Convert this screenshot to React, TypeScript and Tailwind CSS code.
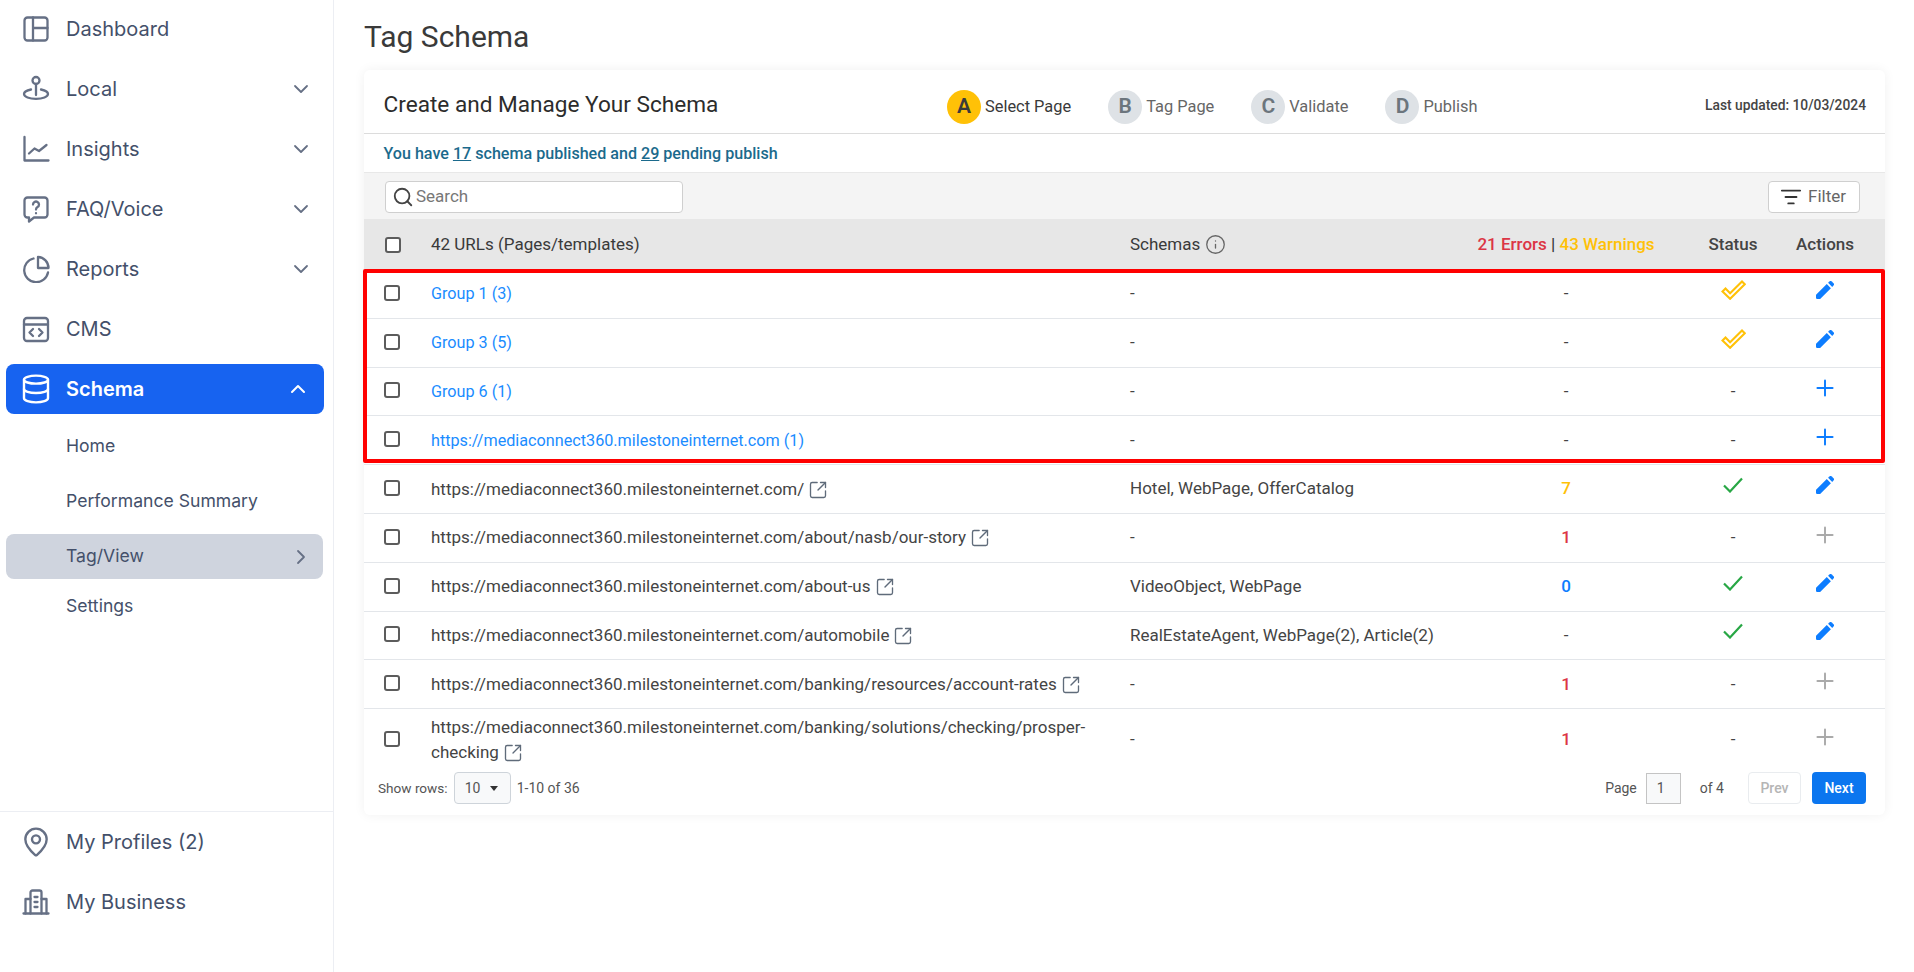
import React from "react";
import {
  ChevronDown,
  ChevronRight,
  ChevronUp,
  Database,
  Info,
  ListFilter,
  MapPin,
  Plus,
  Search,
  SquareArrowOutUpRight,
} from "lucide-react";

type IconProps = { className?: string };

const base = {
  viewBox: "0 0 28 28",
  fill: "none",
  stroke: "currentColor",
  strokeWidth: 2.3,
  strokeLinecap: "round" as const,
  strokeLinejoin: "round" as const,
};

const DashboardIcon = ({ className }: IconProps) => (
  <svg {...base} className={className}>
    <rect x="2.500" y="2.500" width="23" height="23" rx="3" />
    <path d="M11 2.500v23M11 13h14.500" />
  </svg>
);

const LocalIcon = ({ className }: IconProps) => (
  <svg {...base} className={className}>
    <circle cx="14" cy="5.500" r="3.500" />
    <path d="M14 9v11" />
    <path d="M9 14.500c-4 .8-7 2.400-7 4.600 0 2.700 5.400 4.700 12 4.700s12-2 12-4.700c0-2.200-3-3.800-7-4.600" />
  </svg>
);

const InsightsIcon = ({ className }: IconProps) => (
  <svg {...base} className={className}>
    <path d="M2.500 2v23.500h24" />
    <path d="M7 18.500l5.500-5 4.500 2.500 7.500-6" />
  </svg>
);

const FaqIcon = ({ className }: IconProps) => (
  <svg {...base} className={className}>
    <path d="M5.500 2.500h17a3 3 0 0 1 3 3v14a3 3 0 0 1-3 3H12l-5 4v-4H5.500a3 3 0 0 1-3-3v-14a3 3 0 0 1 3-3z" />
    <path d="M11 9.500a3 3 0 1 1 4.500 2.600c-1 .6-1.500 1.200-1.500 2.400" />
    <path d="M14 18.200v.1" />
  </svg>
);

const ReportsIcon = ({ className }: IconProps) => (
  <svg {...base} className={className}>
    <path d="M11.500 3.500A12 12 0 1 0 26 17.500" />
    <path d="M16 2a11 11 0 0 1 10.500 11H16z" />
  </svg>
);

const CmsIcon = ({ className }: IconProps) => (
  <svg {...base} className={className}>
    <rect x="2" y="3" width="24" height="23" rx="3" />
    <path d="M2 9.500h24" />
    <path d="M11 14l-3.500 3.500L11 21M17 14l3.500 3.500L17 21" />
  </svg>
);

const BusinessIcon = ({ className }: IconProps) => (
  <svg {...base} className={className}>
    <path d="M1.500 25.500h25" />
    <path d="M8.500 25.500V4.500a2 2 0 0 1 2-2h7a2 2 0 0 1 2 2v21" />
    <path d="M8.500 11H3.500v14.500M19.500 11h5v14.500" />
    <path d="M12.500 9h3M12.500 14h3M12.500 19h3" />
  </svg>
);

const PencilIcon = ({ className }: IconProps) => (
  <svg viewBox="0 0 18 18" fill="currentColor" className={className}>
    <path d="M0.300 13.600 10.800 3.100l4.100 4.100L4.400 17.700a1 1 0 0 1-.5.3H1.200A1.200 1.200 0 0 1 0 16.800v-2.500a1 1 0 0 1 .3-.7z" />
    <path d="M12.100 1.800 13.400.500a1.700 1.700 0 0 1 2.400 0l1.700 1.700a1.700 1.700 0 0 1 0 2.400l-1.300 1.300z" />
  </svg>
);

const DoubleCheck = ({ className }: IconProps) => (
  <svg viewBox="0 0 25 20" fill="none" stroke="currentColor" strokeWidth="2.100" strokeLinejoin="miter" className={className}>
    <path d="M1.500 11.500 4.500 8.600 9.100 13.300 21 1.500 23.800 4.300 9.100 18.800z" />
  </svg>
);

const GreenCheck = ({ className }: IconProps) => (
  <svg viewBox="0 0 20 16" fill="none" stroke="currentColor" strokeWidth="2.200" className={className}>
    <path d="M1 8.500 7 14.500 19 1.500" />
  </svg>
);

type NavItem = {
  label: string;
  icon: React.ComponentType<IconProps>;
  chevron?: boolean;
};

const topNav: NavItem[] = [
  { label: "Dashboard", icon: DashboardIcon },
  { label: "Local", icon: LocalIcon, chevron: true },
  { label: "Insights", icon: InsightsIcon, chevron: true },
  { label: "FAQ/Voice", icon: FaqIcon, chevron: true },
  { label: "Reports", icon: ReportsIcon, chevron: true },
  { label: "CMS", icon: CmsIcon },
];

function Sidebar() {
  return (
    <aside className="w-[334px] h-full shrink-0 border-r border-[#eceef3] flex flex-col justify-between font-['Inter',sans-serif] text-[#44506a]">
      <div className="pt-1">
        {topNav.map((item) => (
          <div key={item.label} className="h-[50px] mb-[10px] mx-[6px] pl-4 pr-[14px] flex items-center text-[20px]">
            <item.icon className="w-7 h-7 text-[#667085] shrink-0" />
            <span className="ml-[16px] flex-1">{item.label}</span>
            {item.chevron && <ChevronDown className="w-6 h-6 text-[#667085]" strokeWidth={1.8} />}
          </div>
        ))}
        <div className="h-[50px] mx-[6px] w-[318px] pl-4 pr-[14px] flex items-center text-[20px] font-semibold text-white bg-[#1763f0] rounded-lg">
          <Database className="w-8 h-8 -mx-[2px] shrink-0" strokeWidth={1.8} />
          <span className="ml-[16px] flex-1">Schema</span>
          <ChevronUp className="w-6 h-6" strokeWidth={2} />
        </div>
        <div className="mt-[10px] text-[17.6px]">
          <div className="h-[45px] pl-[66px] flex items-center">Home</div>
          <div className="h-[45px] mt-[10px] pl-[66px] flex items-center">Performance Summary</div>
          <div className="h-[45px] mt-[10px] mx-[6px] w-[317px] pl-[60px] pr-[10px] flex items-center justify-between bg-[#cfd4de] rounded-lg">
            <span>Tag/View</span>
            <ChevronRight className="w-6 h-6 text-[#667085]" strokeWidth={1.8} />
          </div>
          <div className="h-[40px] mt-[7px] pl-[66px] flex items-center">Settings</div>
        </div>
      </div>
      <div className="border-t border-[#eceef3] pt-[5px] pb-[24px]">
        <div className="h-[50px] mb-[10px] pl-[22px] flex items-center text-[20px]">
          <MapPin className="w-8 h-8 -mx-[2px] text-[#667085]" strokeWidth={1.8} />
          <span className="ml-[16px]">My Profiles (2)</span>
        </div>
        <div className="h-[50px] mb-[21px] pl-[22px] flex items-center text-[20px]">
          <BusinessIcon className="w-7 h-7 text-[#667085]" />
          <span className="ml-[16px]">My Business</span>
        </div>
      </div>
    </aside>
  );
}

type Row = {
  url: string;
  link?: boolean;
  external?: boolean;
  schemas: string;
  issues: string;
  status: "partial" | "done" | "none";
  action: "edit" | "add" | "disabled";
};

const rows: Row[] = [
  { url: "Group 1 (3)", link: true, schemas: "-", issues: "-", status: "partial", action: "edit" },
  { url: "Group 3 (5)", link: true, schemas: "-", issues: "-", status: "partial", action: "edit" },
  { url: "Group 6 (1)", link: true, schemas: "-", issues: "-", status: "none", action: "add" },
  { url: "https://mediaconnect360.milestoneinternet.com (1)", link: true, schemas: "-", issues: "-", status: "none", action: "add" },
  { url: "https://mediaconnect360.milestoneinternet.com/", external: true, schemas: "Hotel, WebPage, OfferCatalog", issues: "7", status: "done", action: "edit" },
  { url: "https://mediaconnect360.milestoneinternet.com/about/nasb/our-story", external: true, schemas: "-", issues: "1", status: "none", action: "disabled" },
  { url: "https://mediaconnect360.milestoneinternet.com/about-us", external: true, schemas: "VideoObject, WebPage", issues: "0", status: "done", action: "edit" },
  { url: "https://mediaconnect360.milestoneinternet.com/automobile", external: true, schemas: "RealEstateAgent, WebPage(2), Article(2)", issues: "-", status: "done", action: "edit" },
  { url: "https://mediaconnect360.milestoneinternet.com/banking/resources/account-rates", external: true, schemas: "-", issues: "1", status: "none", action: "disabled" },
  { url: "https://mediaconnect360.milestoneinternet.com/banking/solutions/checking/prosper-checking", external: true, schemas: "-", issues: "1", status: "none", action: "disabled" },
];

const issueColor = (issues: string) => {
  switch (issues) {
    case "7": return "text-[#ffc107] font-medium";
    case "1": return "text-[#dc3545] font-medium";
    case "0": return "text-[#0d7dff] font-medium";
    default: return "text-[#444]";
  }
};

const rowGrid = "grid grid-cols-[67px_699px_316px_240px_94px_90px] items-center";

const Checkbox = () => (
  <input type="checkbox" className="appearance-none block w-4 h-4 border-2 border-[#5c5c5c] rounded-[3px] bg-white" />
);

const steps = [
  { letter: "A", label: "Select Page", active: true },
  { letter: "B", label: "Tag Page" },
  { letter: "C", label: "Validate" },
  { letter: "D", label: "Publish" },
];

function Card() {
  return (
    <section className="relative w-[1521px] h-[745px] bg-white rounded-md shadow-[0_0_12px_rgba(0,0,0,0.06)] text-[17px] text-[#444]">
      {/* Title bar */}
      <div className="h-[64px] border-b border-[#dcdcdc] pl-[19.5px] pr-[19px] flex items-center justify-between">
        <h2 className="w-[563.5px] pt-[6px] text-[22.6px] text-[#2c2c2c]">Create and Manage Your Schema</h2>
        <div className="flex-1 flex items-center gap-[37px] pt-[11px] text-[16.4px]">
          {steps.map((step) => (
            <div key={step.letter} className="flex items-center gap-1">
              <span className={`w-[34px] h-[34px] rounded-full flex items-center justify-center text-[21px] font-semibold ${step.active ? "bg-[#ffc107] text-[#3a3a3a]" : "bg-[#dee2e6] text-[#6c757d]"}`}>
                {step.letter}
              </span>
              <span className={step.active ? "text-[#3a3a3a]" : "text-[#666]"}>{step.label}</span>
            </div>
          ))}
        </div>
        <span className="text-[13.8px] font-medium text-[#444] mt-[8px]">Last updated: 10/03/2024</span>
      </div>

      <div className="h-[39px] border-b border-[#e8e8e8] pl-[19.5px] pt-[2px] flex items-center text-[16.1px] font-medium text-[#1b6a8c]">
        <span>You have <u>17</u> schema published and <u>29</u> pending publish</span>
      </div>

      {/* Toolbar */}
      <div className="h-[46px] bg-[#f4f4f4] pl-[21px] pr-[25px] pt-[2px] flex items-center justify-between">
        <div className="w-[298px] h-8 bg-white border border-[#cfcfcf] rounded-[4px] pl-[6px] flex items-center gap-[2px]">
          <Search className="w-[22px] h-[22px] text-[#444]" strokeWidth={2} />
          <span className="text-[#777]">Search</span>
        </div>
        <button className="w-[92px] h-8 bg-white border border-[#cfcfcf] rounded-[4px] flex items-center justify-center gap-[6px] pr-[2px] text-[#666]">
          <ListFilter className="w-[22px] h-[22px] text-[#333]" strokeWidth={2} />
          Filter
        </button>
      </div>

      {/* Table head */}
      <div className={`${rowGrid} h-[51px] bg-[#e7e7e7] text-[#3a3a3a]`}>
        <div className="pl-[21px]"><Checkbox /></div>
        <div>42 URLs (Pages/templates)</div>
        <div className="flex items-center gap-[5px]">
          Schemas
          <Info className="w-[21px] h-[21px] text-[#666]" strokeWidth={1.5} />
        </div>
        <div className="text-center font-medium">
          <span className="text-[#dc3545]">21 Errors</span> | <span className="text-[#ffc107]">43 Warnings</span>
        </div>
        <div className="text-center font-medium text-[#444]">Status</div>
        <div className="text-center font-medium text-[#444]">Actions</div>
      </div>

      {/* Rows */}
      {rows.map((row, i) => {
        const last = i === rows.length - 1;
        return (
          <div key={row.url} className={`${rowGrid} ${last ? "h-[62px]" : "h-[48.8px] border-b border-[#e3e6ea]"}`}>
            <div className="pl-5 -translate-y-px"><Checkbox /></div>
            <div className={`leading-[25px] pr-[12px] ${row.link ? "text-[16.2px] text-[#1a8cff]" : "text-[#444]"}`}>
              {row.url}
              {row.external && (
                <SquareArrowOutUpRight className="inline-block ml-[4px] w-[20px] h-[20px] text-[#5f6b7a] align-[-5px]" strokeWidth={1.6} />
              )}
            </div>
            <div>{row.schemas}</div>
            <div className={`text-center ${issueColor(row.issues)}`}>{row.issues}</div>
            <div className="flex justify-center">
              {row.status === "partial" && <DoubleCheck className="w-[25px] h-5 text-[#ffc107] -translate-y-1" />}
              {row.status === "done" && <GreenCheck className="w-5 h-4 text-[#28a745] -translate-y-1" />}
              {row.status === "none" && <span>-</span>}
            </div>
            <div className="flex justify-center">
              {row.action === "edit" && <PencilIcon className="w-[18px] h-[18px] text-[#0d7dff] -translate-y-1" />}
              {row.action === "add" && <Plus className="w-[26px] h-[26px] text-[#0d7dff] -translate-y-[3px]" strokeWidth={1.8} />}
              {row.action === "disabled" && <Plus className="w-[26px] h-[26px] text-[#aaa] -translate-y-[3px]" strokeWidth={1.8} />}
            </div>
          </div>
        );
      })}

      {/* Footer */}
      <div className="pt-[1px] pl-[14px] pr-[19px] flex items-start justify-between text-[14px] text-[#555]">
        <div className="flex items-center h-8">
          <span className="text-[13.6px]">Show rows:</span>
          <div className="ml-[6px] w-[57px] h-8 bg-[#f8f9fa] border border-[#ced4da] rounded-[4px] pl-[10px] flex items-center gap-[10px]">
            10
            <span className="w-0 h-0 border-x-[4px] border-x-transparent border-t-[5px] border-t-[#333]" />
          </div>
          <span className="ml-[6px]">1-10 of 36</span>
        </div>
        <div className="flex items-center h-8">
          Page
          <div className="ml-[9px] w-[35px] h-[31px] bg-[#f8f9fa] border border-[#c4c4c4] flex items-center pl-[10px]">1</div>
          <span className="ml-[19px]">of 4</span>
          <div className="ml-6 w-[53px] h-8 border border-[#e9ecef] rounded-[4px] flex items-center justify-center font-medium text-[#b5b5b5]">Prev</div>
          <div className="ml-[11px] w-[54px] h-8 bg-[#0b76ef] rounded-[4px] flex items-center justify-center font-medium text-white">Next</div>
        </div>
      </div>

      {/* Highlight box laid over the first rows */}
      <div className="absolute left-[-1px] top-[199px] w-[1522px] h-[194px] border-[4px] border-[#ff0000] rounded-[2px] pointer-events-none" />
    </section>
  );
}

export default function App() {
  return (
    <div className="h-screen w-full bg-white flex overflow-hidden font-['Roboto',sans-serif]">
      <Sidebar />
      <main className="flex-1 pl-[30px]">
        <h1 className="h-[70px] pt-[15px] text-[30px] leading-[44px] text-[#3a3a3a]">Tag Schema</h1>
        <Card />
      </main>
    </div>
  );
}
